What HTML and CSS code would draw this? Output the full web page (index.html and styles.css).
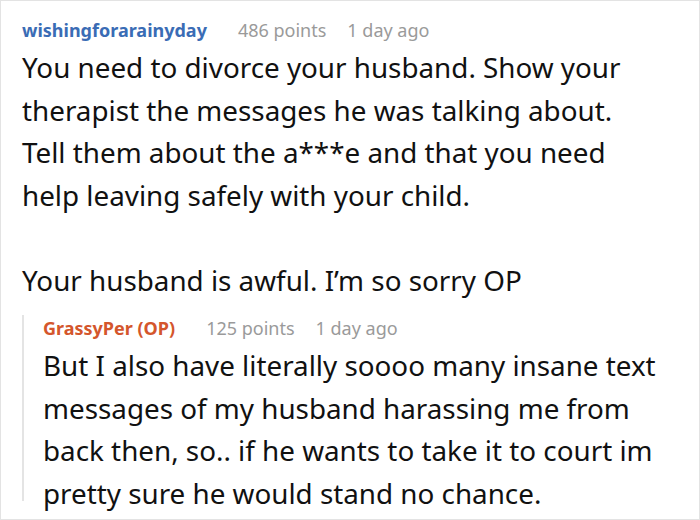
FILE: index.html
```html
<!DOCTYPE html>
<html>
<head>
<meta charset="utf-8">
<link rel="stylesheet" href="styles.css">
</head>
<body>
<div class="frame">
  <div class="comment">
    <div class="meta">
      <span class="author">wishingforarainyday</span>
      <span class="info points">486 points</span>
      <span class="info">1 day ago</span>
    </div>
    <div class="body">
      <p>You need to divorce your husband. Show your therapist the messages he was talking about. Tell them about the a***e and that you need help leaving safely with your child.</p>
      <p>Your husband is awful. I’m so sorry OP</p>
    </div>
    <div class="reply">
      <div class="meta">
        <span class="author op">GrassyPer (OP)</span>
        <span class="info points">125 points</span>
        <span class="info">1 day ago</span>
      </div>
      <div class="body">
        <p>But I also have literally soooo many insane text messages of my husband harassing me from back then, so.. if he wants to take it to court im pretty sure he would stand no chance.</p>
      </div>
    </div>
  </div>
</div>
</body>
</html>
```

FILE: styles.css
```css
html, body {
  margin: 0;
  padding: 0;
  background: #fff;
}
.frame {
  width: 700px;
  height: 520px;
  box-sizing: border-box;
  border: 1px solid #e3e3e3;
  overflow: hidden;
  font-family: "Noto Sans", "Open Sans", sans-serif;
  color: #111;
}
.comment {
  padding: 16px 68px 0 21px;
}
.meta {
  display: flex;
  align-items: baseline;
  gap: 21px;
  font-size: 18px;
  line-height: 26px;
  white-space: nowrap;
}
.meta .points {
  margin-left: 10px;
}
.author {
  font-weight: bold;
  color: #3a6cb5;
}
.author.op {
  color: #d4562c;
}
.info {
  color: #9a9a9a;
}
.body {
  font-size: 27.8px;
  line-height: 42.5px;
  margin-top: 3px;
}
.body p {
  margin: 0 0 42.5px 0;
}
.body p:last-child {
  margin-bottom: 0;
}
.reply {
  position: relative;
  margin-top: 14px;
  margin-right: -30px;
  padding-left: 21px;
}
.reply::before {
  content: "";
  position: absolute;
  left: 0;
  top: 0;
  width: 2px;
  height: 186px;
  background: #e4e4e4;
}
```
